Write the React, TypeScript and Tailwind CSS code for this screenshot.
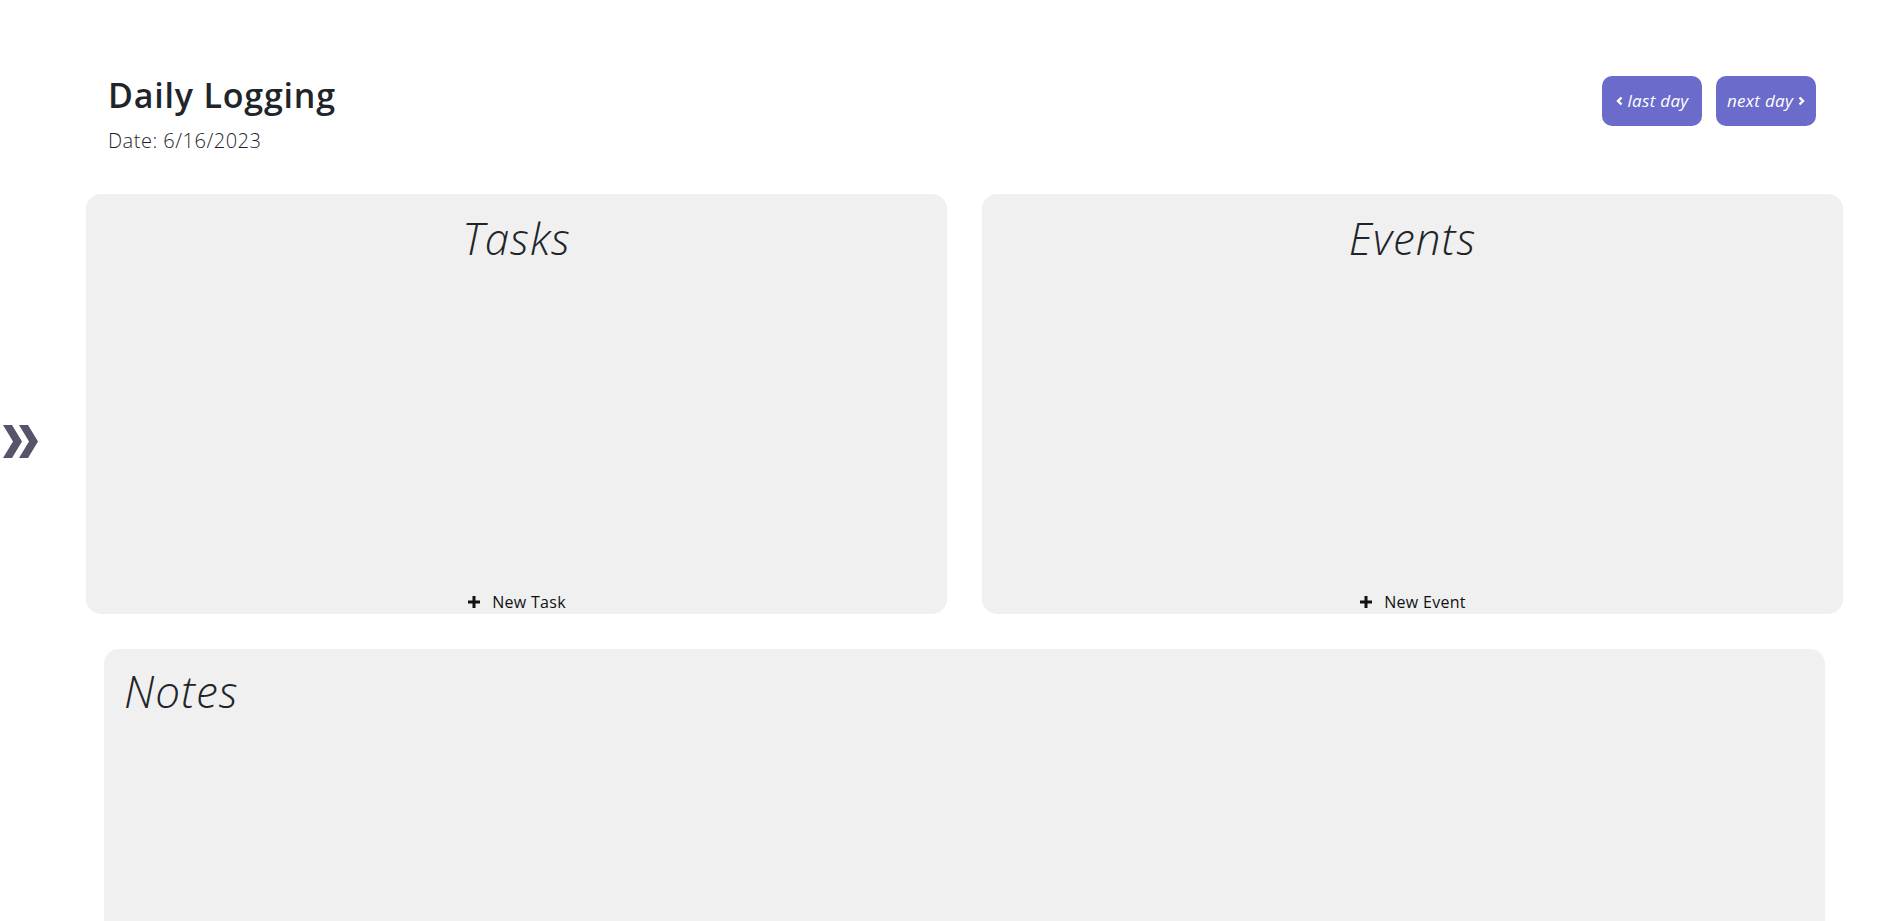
import React from 'react';

function PlusIcon() {
    return <svg width="14" height="14" viewBox="0 0 14 14" className="shrink-0">
        <path d="M7 1v12M1 7h12" stroke="#111" strokeWidth="3" />
    </svg>
}

function AnglesRight() {
    return <svg width="36" height="33" viewBox="0 0 36 33">
        <path d="M0 0h9l10 16.5L9 33H0l10-16.5z" fill="#55546a" />
        <path d="M16 0h9l10 16.5L25 33h-9l10-16.5z" fill="#55546a" />
    </svg>
}

function Chevron({ dir }: { dir: 'left' | 'right' }) {
    return <svg width="7" height="10" viewBox="0 0 7 10" className="shrink-0">
        <path d={dir === 'left' ? 'M5.5 1.5L2 5l3.5 3.5' : 'M1.5 1.5L5 5 1.5 8.5'} stroke="#fff" strokeWidth="2.4" fill="none" />
    </svg>
}

interface LogCardProps {
    title: string;
    action: string;
}

function LogCard(props: LogCardProps) {
    return <div className="flex h-[420px] flex-col items-center rounded-[15px] bg-[#f0f0f0]">
        <h2 className="mt-[18px] text-[44px] font-light italic leading-[52px] tracking-[1px] text-[#212529]">{props.title}</h2>
        <div className="flex-1" />
        <button className="flex items-center gap-[11px] text-[16px] leading-[24px] tracking-[0.3px] text-[#111]">
            <PlusIcon />
            {props.action}
        </button>
    </div>
}

export default function App() {
    return <div className="relative min-h-[921px] bg-white font-['Open_Sans',sans-serif] text-[#212529]">
        <div className="absolute left-[3px] top-[425px]">
            <AnglesRight />
        </div>
        <div className="pl-[86px] pr-[58px] pt-[75px]">
            <header className="flex items-start justify-between pl-[22px] pr-[27px]">
                <div>
                    <h1 className="text-[34px] font-semibold leading-[40px] tracking-[0.8px]">Daily Logging</h1>
                    <p className="mt-[12px] text-[20px] font-light leading-[28px] tracking-[0.5px] text-[#1e1e2e]">Date: 6/16/2023</p>
                </div>
                <div className="mt-[1px] flex gap-[14px]">
                    <button className="flex h-[50px] w-[100px] items-center justify-center gap-[5px] rounded-[10px] bg-[#6b6bcb] text-[17px] italic tracking-[0.3px] text-white">
                        <Chevron dir="left" />
                        last day
                    </button>
                    <button className="flex h-[50px] w-[100px] items-center justify-center gap-[5px] rounded-[10px] bg-[#6b6bcb] text-[17px] italic tracking-[0.3px] text-white">
                        next day
                        <Chevron dir="right" />
                    </button>
                </div>
            </header>
            <div className="mt-[39px] grid grid-cols-2 gap-[35px]">
                <LogCard title="Tasks" action="New Task" />
                <LogCard title="Events" action="New Event" />
            </div>
            <section className="mx-[18px] mt-[35px] h-[400px] rounded-[15px] bg-[#f0f0f0] px-[20px] pt-[16px]">
                <h2 className="text-[44px] font-light italic leading-[52px] tracking-[1px]">Notes</h2>
            </section>
        </div>
    </div>
}
